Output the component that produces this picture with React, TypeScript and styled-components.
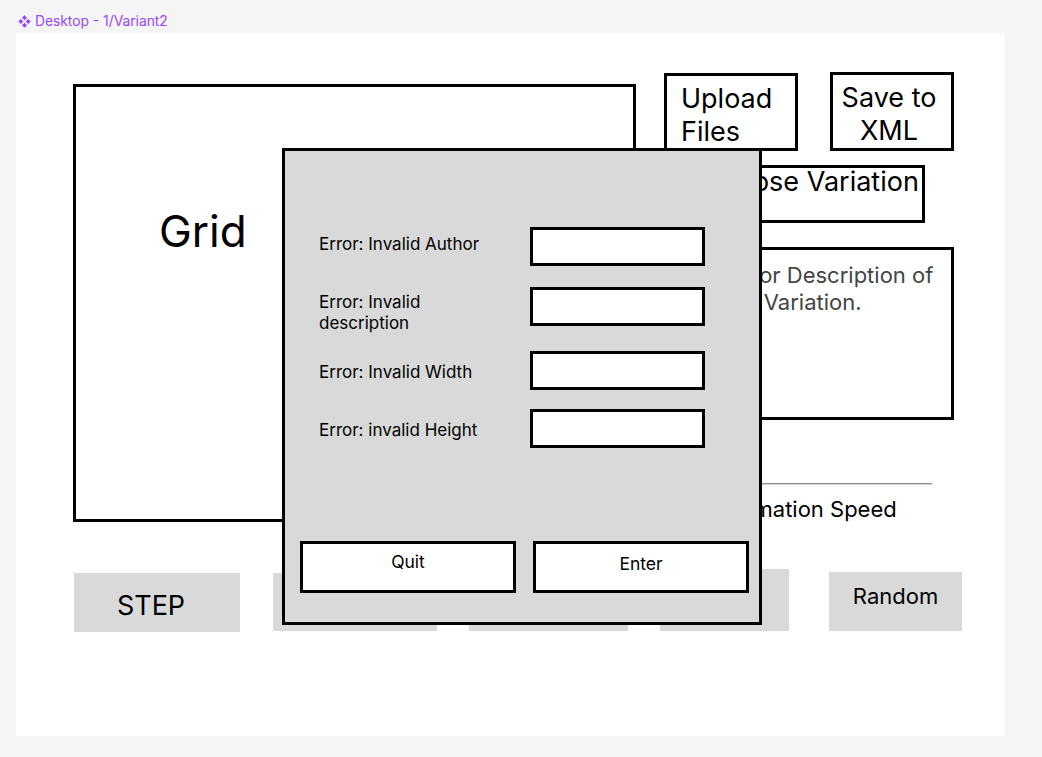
import React from "react";
import styled, { createGlobalStyle } from "styled-components";

const GlobalStyle = createGlobalStyle`
  * { box-sizing: border-box; }
  html, body { margin: 0; padding: 0; }
  body {
    background: #f5f5f5;
    font-family: Inter, "Noto Sans", "Liberation Sans", sans-serif;
    color: #000;
  }
`;

const Page = styled.div`
  min-height: 757px;
  padding-left: 16px;
  background: #f5f5f5;
`;

const FrameLabel = styled.div`
  height: 33px;
  padding-top: 9px;
  padding-left: 2px;
  display: flex;
  align-items: center;
  gap: 4px;
  font-size: 13.8px;
  color: #9747ff;
  line-height: 24px;
`;

const Frame = styled.div`
  position: relative;
  width: 989px;
  height: 703px;
  background: #ffffff;
  overflow: hidden;
`;

const TopSection = styled.div`
  display: flex;
  align-items: flex-start;
  padding-left: 57px;
`;

const GridBox = styled.div`
  margin-top: 51px;
  width: 563px;
  height: 438px;
  border: 3px solid #000;
  padding: 118px 0 0 83px;
`;

const GridTitle = styled.div`
  font-size: 44px;
  line-height: 1.21;
`;

const SidePanel = styled.div`
  margin-left: 28px;
  margin-top: 39px;
  display: flex;
  flex-direction: column;
  align-items: flex-start;
`;

const FileRow = styled.div`
  display: flex;
  align-items: flex-start;
  gap: 32px;
`;

const OutlineButton = styled.div<{ $w: number; $h: number; $mt: number; $center?: boolean; $pl: number; $pr: number }>`
  width: ${(p) => p.$w}px;
  height: ${(p) => p.$h}px;
  margin-top: ${(p) => p.$mt}px;
  border: 3px solid #000;
  background: #fff;
  padding: 6px ${(p) => p.$pr}px 0 ${(p) => p.$pl}px;
  font-size: 27px;
  line-height: 33px;
  text-align: ${(p) => (p.$center ? "center" : "left")};
`;

const VariationSelect = styled.div`
  margin-top: 14px;
  margin-left: 28px;
  width: 233px;
  height: 58px;
  border: 3px solid #000;
  padding-left: 6px;
  font-size: 27px;
  line-height: 28px;
  white-space: nowrap;
`;

const DescriptionBox = styled.div`
  margin-top: 24px;
  margin-left: 28px;
  width: 262px;
  height: 173px;
  border: 3px solid #000;
  padding: 12px 0 0 6px;
  font-size: 22px;
  line-height: 26.6px;
  color: #444;
  white-space: nowrap;
`;

const SpeedSlider = styled.div`
  margin-top: 63px;
  margin-left: 40px;
  width: 228px;
  height: 2px;
  background: linear-gradient(#8f8f8f 0 50%, #d2d2d2 50% 100%);
`;

const SpeedLabel = styled.div`
  margin-top: 11px;
  margin-left: 56px;
  font-size: 22px;
  line-height: 26.6px;
  white-space: nowrap;
`;

const ControlBar = styled.div`
  display: flex;
  align-items: flex-start;
  margin-top: 46px;
  padding-left: 58px;
`;

const ControlButton = styled.div<{ $w: number; $h: number; $mt: number; $ml: number; $size: number; $pad: string }>`
  width: ${(p) => p.$w}px;
  height: ${(p) => p.$h}px;
  margin-top: ${(p) => p.$mt}px;
  margin-left: ${(p) => p.$ml}px;
  background: #d9d9d9;
  display: flex;
  align-items: center;
  justify-content: center;
  padding: ${(p) => p.$pad};
  font-size: ${(p) => p.$size}px;
  line-height: 1.21;
`;

const ErrorDialog = styled.div`
  position: absolute;
  left: 266px;
  top: 115px;
  width: 480px;
  height: 477px;
  border: 3px solid #000;
  background: #d9d9d9;
  display: flex;
  flex-direction: column;
  padding: 76px 10px 29px 15px;
`;

const ErrorForm = styled.div`
  display: flex;
  flex-direction: column;
  padding-left: 19px;
`;

const ErrorRow = styled.div<{ $mt: number }>`
  display: flex;
  align-items: center;
  height: 39px;
  margin-top: ${(p) => p.$mt}px;
`;

const ErrorLabel = styled.div<{ $nudge: number }>`
  width: 211px;
  flex: none;
  font-size: 17px;
  line-height: 20.6px;
  margin-top: ${(p) => Math.max(0, p.$nudge * 2)}px;
  margin-bottom: ${(p) => Math.max(0, -p.$nudge * 2)}px;
`;

const ErrorInput = styled.div`
  width: 175px;
  flex: none;
  height: 39px;
  border: 3px solid #000;
  background: #fff;
`;

const DialogActions = styled.div`
  margin-top: auto;
  display: flex;
  gap: 17px;
`;

const DialogButton = styled.div<{ $pt: number }>`
  width: 216px;
  flex: none;
  height: 52px;
  border: 3px solid #000;
  background: #fff;
  padding-top: ${(p) => p.$pt}px;
  text-align: center;
  font-size: 17.5px;
  line-height: 21px;
`;

const ComponentSetIcon = () => (
  <svg width="13" height="13" viewBox="0 0 12 12" fill="#9747ff" aria-hidden="true">
    <path d="M6 0.3 L8.3 2.6 L6 4.9 L3.7 2.6 Z" />
    <path d="M2.6 3.7 L4.9 6 L2.6 8.3 L0.3 6 Z" />
    <path d="M9.4 3.7 L11.7 6 L9.4 8.3 L7.1 6 Z" />
    <path d="M6 7.1 L8.3 9.4 L6 11.7 L3.7 9.4 Z" />
  </svg>
);

const errors = [
  { label: <>Error: Invalid Author</>, mt: 0, nudge: -2.5 },
  { label: <>Error: Invalid<br />description</>, mt: 21, nudge: 6.5 },
  { label: <>Error: Invalid Width</>, mt: 25, nudge: 2 },
  { label: <>Error: invalid Height</>, mt: 19, nudge: 2 },
];

const controls = [
  { text: "STEP", w: 166, h: 59, mt: 4, ml: 0, size: 27, pad: "8px 12px 0 0" },
  { text: "Start", w: 164, h: 58, mt: 4, ml: 33, size: 22, pad: "0" },
  { text: "Stop", w: 159, h: 58, mt: 4, ml: 32, size: 22, pad: "0" },
  { text: "Clear", w: 129, h: 62, mt: 0, ml: 32, size: 22, pad: "0 30px 0 0" },
  { text: "Random", w: 133, h: 59, mt: 3, ml: 40, size: 22, pad: "0 0 10px 0" },
];

export default function App() {
  return (
    <Page>
      <GlobalStyle />
      <FrameLabel>
        <ComponentSetIcon />
        Desktop - 1/Variant2
      </FrameLabel>
      <Frame>
        <TopSection>
          <GridBox>
            <GridTitle>Grid</GridTitle>
          </GridBox>
          <SidePanel>
            <FileRow>
              <OutlineButton $w={134} $h={78} $mt={1} $pl={14} $pr={0}>
                Upload
                <br />
                Files
              </OutlineButton>
              <OutlineButton $w={124} $h={79} $mt={0} $pl={0} $pr={6} $center>
                Save to
                <br />
                XML
              </OutlineButton>
            </FileRow>
            <VariationSelect>Choose Variation</VariationSelect>
            <DescriptionBox>
              Text for Description of
              <br />
              given Variation.
            </DescriptionBox>
            <SpeedSlider />
            <SpeedLabel>Animation Speed</SpeedLabel>
          </SidePanel>
        </TopSection>
        <ControlBar>
          {controls.map((c) => (
            <ControlButton key={c.text} $w={c.w} $h={c.h} $mt={c.mt} $ml={c.ml} $size={c.size} $pad={c.pad}>
              {c.text}
            </ControlButton>
          ))}
        </ControlBar>
        <ErrorDialog>
          <ErrorForm>
            {errors.map((e, i) => (
              <ErrorRow key={i} $mt={e.mt}>
                <ErrorLabel $nudge={e.nudge}>{e.label}</ErrorLabel>
                <ErrorInput />
              </ErrorRow>
            ))}
          </ErrorForm>
          <DialogActions>
            <DialogButton $pt={7}>Quit</DialogButton>
            <DialogButton $pt={9}>Enter</DialogButton>
          </DialogActions>
        </ErrorDialog>
      </Frame>
    </Page>
  );
}
